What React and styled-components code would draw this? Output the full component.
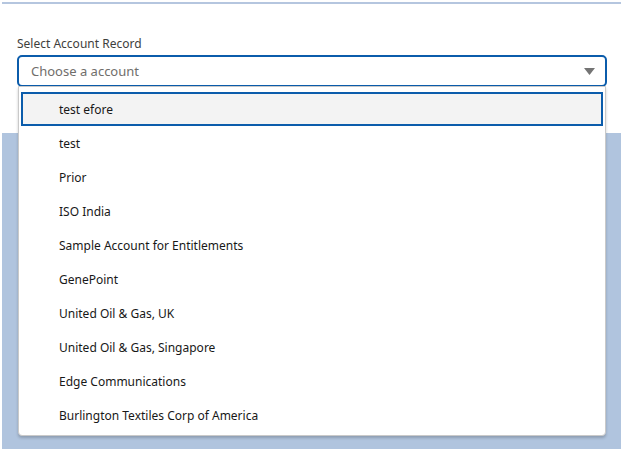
import React from 'react';
import styled, { createGlobalStyle } from 'styled-components';

const Global = createGlobalStyle`
  body { margin: 0; background: #fff; font-family: "Segoe UI", "Noto Sans", "Liberation Sans", sans-serif; }
`;

const Frame = styled.div`
  margin: 2px 2px 0;
  height: 445px;
  border-top: 2px solid #b5c6df;
  background: #b0c4de;
  display: flex;
  flex-direction: column;
  position: relative;
`;

const Panel = styled.div`
  background: #fff;
  height: 129px;
  padding: 31px 14px 0 15px;
  box-sizing: border-box;
`;

const Label = styled.div`
  font-size: 12px;
  color: #3e3e3c;
  margin-bottom: 3px;
`;

const Select = styled.div`
  height: 32px;
  border: 2px solid #0b5cab;
  border-radius: 5px;
  box-sizing: border-box;
  display: flex;
  align-items: center;
  justify-content: space-between;
  padding: 0 10px 0 12px;
  font-size: 13px;
  color: #706e6b;
`;

const Menu = styled.div`
  position: absolute;
  left: 16px;
  right: 15px;
  top: 82px;
  height: 350px;
  background: #fff;
  border: 1px solid #c9c9c9;
  border-radius: 0 0 4px 4px;
  box-shadow: 0 2px 3px rgba(0,0,0,0.2);
  padding: 5px 2px;
  box-sizing: border-box;
`;

const Item = styled.div`
  height: 34px;
  display: flex;
  align-items: center;
  padding-left: 38px;
  font-size: 12px;
  color: #181818;
  box-sizing: border-box;
  ${p => p.active && `
    background: #f3f3f3;
    border: 2px solid #0b5cab;
    padding-left: 36px;
  `}
`;

const items = ['test efore', 'test', 'Prior', 'ISO India', 'Sample Account for Entitlements', 'GenePoint',
  'United Oil & Gas, UK', 'United Oil & Gas, Singapore', 'Edge Communications', 'Burlington Textiles Corp of America'];

export default function App() {
  return (
    <>
      <Global />
      <Frame>
        <Panel>
          <Label>Select Account Record</Label>
          <Select>
            <span>Choose a account</span>
            <svg width="11" height="7" viewBox="0 0 11 7"><path d="M0 0h11L5.5 7z" fill="#747474" /></svg>
          </Select>
        </Panel>
        <Menu>
          {items.map((t, i) => <Item key={t} active={i === 0}>{t}</Item>)}
        </Menu>
      </Frame>
    </>
  );
}
